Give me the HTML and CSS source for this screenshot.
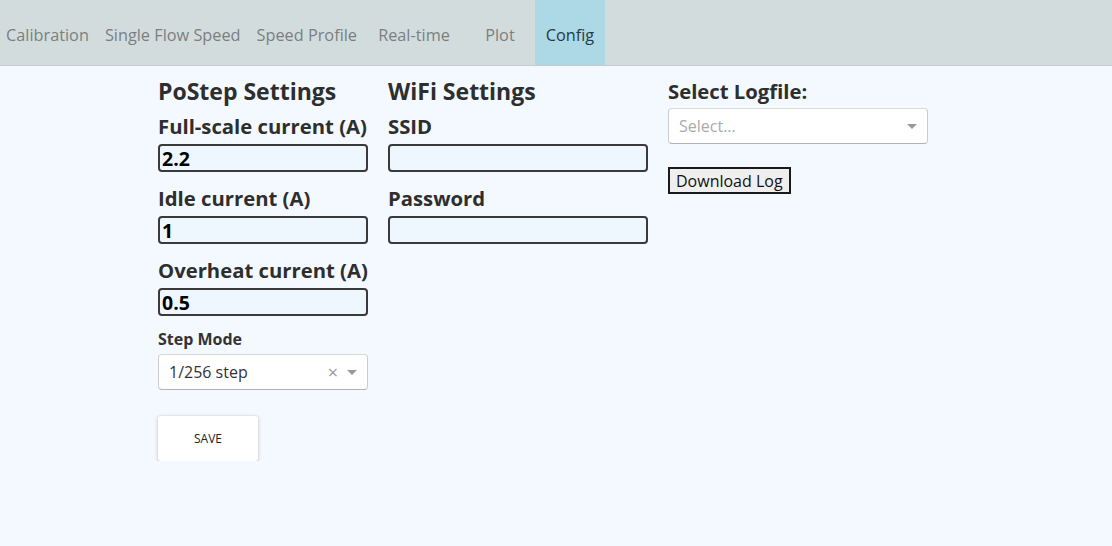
FILE: index.html
```html
<!DOCTYPE html>
<html>
<head>
<meta charset="utf-8">
<link rel="stylesheet" href="styles.css">
</head>
<body>
<nav class="tabs">
  <div class="tab">Calibration</div>
  <div class="tab">Single Flow Speed</div>
  <div class="tab">Speed Profile</div>
  <div class="tab tab-wide">Real-time</div>
  <div class="tab tab-narrow">Plot</div>
  <div class="tab tab-narrow active">Config</div>
</nav>
<main class="content">
  <section class="col col-postep">
    <h2 class="heading">PoStep Settings</h2>
    <label class="label">Full-scale current (A)</label>
    <input class="field" type="text" value="2.2">
    <label class="label">Idle current (A)</label>
    <input class="field" type="text" value="1">
    <label class="label">Overheat current (A)</label>
    <input class="field field-last" type="text" value="0.5">
    <div class="small-label">Step Mode</div>
    <div class="select">
      <span class="select-value">1/256 step</span>
      <span class="select-clear">×</span>
      <span class="select-arrow"></span>
    </div>
    <button class="save">SAVE</button>
  </section>
  <section class="col col-wifi">
    <h2 class="heading">WiFi Settings</h2>
    <label class="label">SSID</label>
    <input class="field" type="text" value="">
    <label class="label">Password</label>
    <input class="field" type="password" value="">
  </section>
  <section class="col col-log">
    <div class="log-title">Select Logfile:</div>
    <div class="select">
      <span class="select-placeholder">Select...</span>
      <span class="select-arrow"></span>
    </div>
    <button class="download">Download Log</button>
  </section>
</main>
</body>
</html>
```

FILE: styles.css
```css
* { box-sizing: border-box; }
html, body {
  margin: 0;
  padding: 0;
  background: #f3f9fe;
  font-family: "Open Sans", "Liberation Sans", sans-serif;
  color: #333;
}
.tabs {
  display: flex;
  height: 66px;
  background: #d3dcdd;
  border-bottom: 1px solid #c4cccd;
}
.tab {
  height: 65px;
  padding: 5px 6px 0;
  margin-right: 4px;
  line-height: 60px;
  font-size: 16.3px;
  color: #7a7f80;
  text-align: center;
}
.tab-wide { min-width: 94px; }
.tab-narrow { min-width: 70px; margin-right: 0; }
.tab.active {
  background: #add8e6;
  color: #263a44;
}
.content {
  display: flex;
  gap: 20px;
  padding: 10px 0 0 158px;
}
.col { display: flex; flex-direction: column; align-items: flex-start; }
.col-postep { width: 210px; }
.col-wifi { width: 260px; }
.col-log { width: 260px; }
.heading {
  margin: 0 0 8px;
  font-size: 23px;
  font-weight: 700;
  line-height: 30px;
  color: #2e2e2e;
}
.label {
  display: block;
  font-size: 20.3px;
  font-weight: 700;
  line-height: 24px;
  color: #2e2e2e;
  margin-bottom: 6px;
  white-space: nowrap;
}
.field {
  width: 100%;
  height: 28px;
  border: 2px solid #3a3a3a;
  border-radius: 4px;
  background: #eff7fe;
  font-family: "Open Sans", "Liberation Sans", sans-serif;
  font-size: 19.5px;
  font-weight: 700;
  color: #000;
  padding: 0 2px;
  margin: 0 0 14px;
  outline: none;
}
.field-last { margin-bottom: 12px; }
.small-label {
  font-size: 16px;
  font-weight: 700;
  line-height: 22px;
  color: #333;
  margin-bottom: 4px;
}
.select {
  width: 100%;
  height: 36px;
  background: #fff;
  border: 1px solid #ccc;
  border-color: #d9d9d9 #ccc #b3b3b3;
  border-radius: 4px;
  display: flex;
  align-items: center;
  padding: 0 10px;
  font-size: 16px;
}
.select-value { flex: 1; color: #333; }
.select-placeholder { flex: 1; color: #aaa; }
.select-clear {
  color: #999;
  font-size: 18px;
  margin-right: 9px;
  line-height: 1;
}
.select-arrow {
  width: 0;
  height: 0;
  border-style: solid;
  border-width: 5px 5px 2.5px;
  border-color: #999 transparent transparent;
  margin-top: 3px;
}
.save {
  margin-top: 26px;
  width: 100px;
  height: 45px;
  background: #fff;
  border: none;
  border-radius: 2px;
  box-shadow: 0 1px 4px rgba(0,0,0,0.2), 0 0 1px rgba(0,0,0,0.25);
  font-family: "Open Sans", "Liberation Sans", sans-serif;
  font-size: 12px;
  color: #222;
}
.log-title {
  font-size: 20.3px;
  font-weight: 700;
  line-height: 30px;
  color: #2e2e2e;
  margin-bottom: 2px;
}
.download {
  margin-top: 23px;
  height: 27px;
  padding: 0 6px;
  background: #efefef;
  border: 2px solid #1a1a1a;
  border-radius: 0;
  font-family: "Open Sans", "Liberation Sans", sans-serif;
  font-size: 16px;
  color: #111;
}
```
